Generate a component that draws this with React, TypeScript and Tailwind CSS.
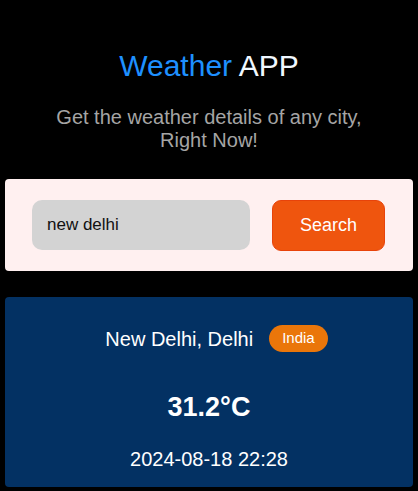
import React from "react";

export default function App() {
  return (
    <div className="min-h-[491px] bg-black px-[5px] pt-[48px] font-['Liberation_Sans',Arial,sans-serif]">
      <h1 className="text-center text-[30px] leading-[36px] font-normal">
        <span className="text-[#1e90ff]">Weather</span>{" "}
        <span className="text-[#f0f8ff]">APP</span>
      </h1>
      <p className="mx-auto mt-[22px] w-[320px] text-center text-[20px] leading-[23px] text-[#a5a5a5]">
        Get the weather details of any city, Right Now!
      </p>
      <div className="mt-[27px] flex h-[92px] items-center gap-[22px] rounded-[4px] bg-[#fff0f0] pl-[27px] pr-[28px]">
        <div className="flex h-[50px] w-[218px] items-center rounded-[10px] bg-[#d3d3d3] pl-[15px] text-[17px] text-[#111]">
          new delhi
        </div>
        <button className="h-[51px] w-[113px] rounded-[9px] border border-[#e8430a] bg-[#ef550e] text-[18px] text-white">
          Search
        </button>
      </div>
      <div className="mt-[26px] flex h-[190px] flex-col items-center rounded-[4px] bg-[#033163] pt-[28px] text-white">
        <div className="flex items-center gap-[16px] pl-[15px]">
          <span className="text-[20px] leading-[26px]">New Delhi, Delhi</span>
          <span className="flex h-[27px] items-center rounded-full bg-[#ea760a] px-[13px] text-[15px]">India</span>
        </div>
        <div className="mt-[39px] text-[27px] font-bold leading-[32px]">31.2°C</div>
        <div className="mt-[24px] text-[20px] leading-[24px]">2024-08-18 22:28</div>
      </div>
    </div>
  );
}
